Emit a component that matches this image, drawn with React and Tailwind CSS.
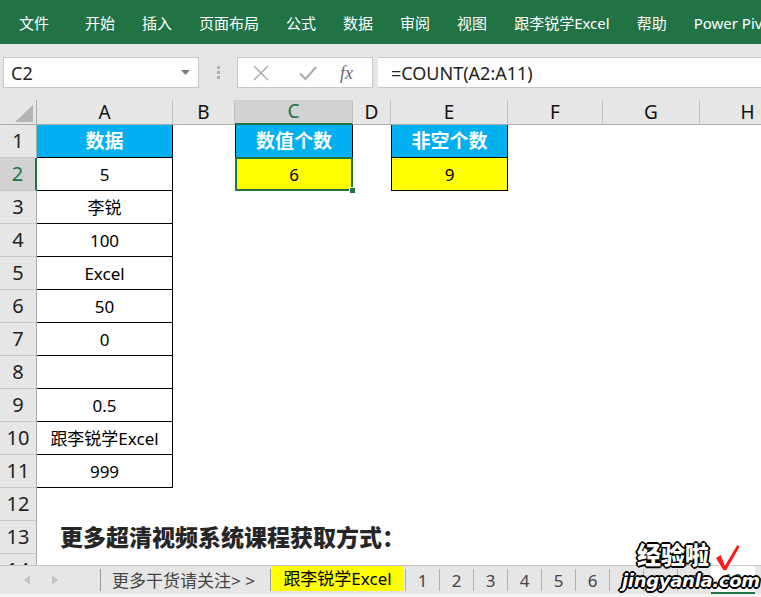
import React from "react";

const tabs = ["开始", "插入", "页面布局", "公式", "数据", "审阅", "视图", "跟李锐学Excel", "帮助", "Power Pivot"];

const colHeads = [
  { k: "A", cls: "" },
  { k: "B", cls: "" },
  { k: "C", cls: "sel" },
  { k: "D", cls: "" },
  { k: "E", cls: "" },
  { k: "F", cls: "" },
  { k: "G", cls: "" },
  { k: "H", cls: "" },
];

const colA = ["数据", "5", "李锐", "100", "Excel", "50", "0", "", "0.5", "跟李锐学Excel", "999"];

function Cell({ row, col }) {
  // column A table
  if (col === "A") {
    if (row === 1)
      return <div className="border-r border-b border-black bg-[#00b0f0] text-white font-bold text-[19px] flex items-center justify-center">{colA[0]}</div>;
    if (row <= 11)
      return <div className="border-r border-b border-black flex items-center justify-center text-[17px] text-black">{colA[row - 1]}</div>;
    if (row === 13)
      return (
        <div className="relative">
          <div className="absolute left-[23px] top-0 h-full flex items-center whitespace-nowrap text-[23px] font-black text-[#262626] z-10">
            更多超清视频系统课程获取方式：
          </div>
        </div>
      );
    return <div />;
  }
  if (col === "C") {
    if (row === 1)
      return <div className="border-l border-r border-b border-black bg-[#00b0f0] text-white font-bold text-[19px] flex items-center justify-center">数值个数</div>;
    if (row === 2)
      return (
        <div className="relative border-l border-r border-b border-black bg-[#ffff00] flex items-center justify-center text-[17px]">
          6
          <div className="absolute -left-[1px] -top-[1px] -right-[1px] -bottom-[1px] border-2 border-[#217346]" />
          <div className="absolute -right-[4px] -bottom-[4px] w-[7px] h-[7px] bg-[#217346] border border-white" />
        </div>
      );
    return <div />;
  }
  if (col === "E") {
    if (row === 1)
      return <div className="border-l border-r border-b border-black bg-[#00b0f0] text-white font-bold text-[19px] flex items-center justify-center">非空个数</div>;
    if (row === 2)
      return <div className="border-l border-r border-b border-black bg-[#ffff00] flex items-center justify-center text-[17px]">9</div>;
    return <div />;
  }
  return <div />;
}

function RowHead({ row }) {
  if (row === 2)
    return <div className="bg-[#d2d2d2] border-r-2 border-r-[#217346] border-b border-b-[#c8c8c8] flex items-center justify-center text-[20px] text-[#217346]">{row}</div>;
  return <div className="bg-[#e6e6e6] border-r border-r-[#ababab] border-b border-b-[#c8c8c8] flex items-center justify-center text-[20px] text-[#222]">{row}</div>;
}

const outline = "[text-shadow:2px_0_0_#000,-2px_0_0_#000,0_2px_0_#000,0_-2px_0_#000,1px_1px_0_#000,-1px_-1px_0_#000,1px_-1px_0_#000,-1px_1px_0_#000]";

export default function App() {
  const rows = Array.from({ length: 14 }, (_, i) => i + 1);
  const cols = ["A", "B", "C", "D", "E", "F", "G", "H"];

  return (
    <div className="relative w-[761px] h-[597px] overflow-hidden flex flex-col bg-white font-['Noto_Sans','Noto_Sans_CJK_SC',sans-serif] leading-none">
      {/* ribbon tabs */}
      <div className="h-[44px] shrink-0 bg-[#217346] flex items-center pl-[19px] pt-[2px] gap-[27px] text-white text-[15px] whitespace-nowrap">
        <span className="mr-[9px]">文件</span>
        {tabs.map((t) => (
          <span key={t}>{t}</span>
        ))}
      </div>

      {/* formula bar */}
      <div className="h-[56px] shrink-0 bg-[#e6e6e6] flex items-start pt-[13px]">
        <div className="ml-[3px] w-[196px] h-[31px] shrink-0 bg-white border border-[#c6c6c6] flex items-center justify-between pl-[7px] pr-[8px]">
          <span className="text-[18px] text-[#222]">C2</span>
          <svg width="9" height="5" viewBox="0 0 9 5"><path d="M0 0h9L4.5 5z" fill="#7a7a7a" /></svg>
        </div>
        <div className="w-[38px] h-[31px] shrink-0 flex flex-col items-center justify-center gap-[2px]">
          <span className="w-[3px] h-[3px] bg-[#b0b0b0]" />
          <span className="w-[3px] h-[3px] bg-[#b0b0b0]" />
          <span className="w-[3px] h-[3px] bg-[#b0b0b0]" />
        </div>
        <div className="w-[136px] h-[31px] shrink-0 bg-white border border-[#c6c6c6] flex items-center">
          <svg className="ml-[15px]" width="16" height="16" viewBox="0 0 16 16"><path d="M1 1L15 15M15 1L1 15" stroke="#a9a9a9" strokeWidth="1.4" /></svg>
          <svg className="ml-[30px]" width="18" height="16" viewBox="0 0 18 16"><path d="M1 8.5L6.5 14L17 2" stroke="#a9a9a9" strokeWidth="2" fill="none" /></svg>
          <span className="ml-[23px] font-['Liberation_Serif',serif] italic text-[18px] text-[#6b6b6b]">fx</span>
        </div>
        <div className="ml-[5px] flex-1 h-[31px] bg-white border-y border-[#c6c6c6] flex items-center pl-[13px] text-[18px] text-[#222]">
          =COUNT(A2:A11)
        </div>
      </div>

      {/* sheet */}
      <div className="h-[465px] shrink-0 overflow-hidden">
        <div className="grid grid-cols-[37px_136px_62px_118px_38px_117px_95px_97px_96px] grid-rows-[25px_repeat(14,33px)]">
          <div className="bg-[#e6e6e6] border-r border-b border-[#ababab] relative">
            <svg className="absolute left-[15px] top-[5px]" width="18" height="17" viewBox="0 0 18 17"><path d="M18 0V17H0z" fill="#b4b4b4" /></svg>
          </div>
          {colHeads.map((c) =>
            c.cls === "sel" ? (
              <div key={c.k} className="bg-[#d2d2d2] border-r border-r-[#c0c0c0] border-b-2 border-b-[#217346] flex items-center justify-center text-[19px] text-[#217346]">{c.k}</div>
            ) : (
              <div key={c.k} className="bg-[#e6e6e6] border-r border-r-[#c0c0c0] border-b border-b-[#ababab] flex items-center justify-center text-[19px] text-[#111]">{c.k}</div>
            )
          )}
          {rows.map((r) => (
            <React.Fragment key={r}>
              <RowHead row={r} />
              {cols.map((c) => (
                <Cell key={c} row={r} col={c} />
              ))}
            </React.Fragment>
          ))}
        </div>
      </div>

      {/* sheet tabs */}
      <div className="h-[29px] shrink-0 bg-[#e6e6e6] border-t border-[#c6c6c6] flex items-stretch text-[17px] whitespace-nowrap">
        <div className="w-[100px] shrink-0 flex items-center gap-[22px] pl-[24px]">
          <svg width="6" height="10" viewBox="0 0 6 10"><path d="M6 0V10L0 5z" fill="#c4c4c4" /></svg>
          <svg width="6" height="10" viewBox="0 0 6 10"><path d="M0 0V10L6 5z" fill="#c4c4c4" /></svg>
        </div>
        <div className="my-[3px] w-px shrink-0 bg-[#9a9a9a]" />
        <div className="w-[169px] shrink-0 flex items-center pl-[11px] text-[#444]">更多干货请关注&gt; &gt;</div>
        <div className="my-[3px] w-px shrink-0 bg-[#9a9a9a]" />
        <div className="w-[131px] shrink-0 ml-[1px] mb-[3px] bg-[#ffff00] flex items-center justify-center text-black">跟李锐学Excel</div>
        <div className="w-[2px] shrink-0" />
        {["1", "2", "3", "4", "5", "6", "7", "8", "9"].map((n) => (
          <React.Fragment key={n}>
            <div className="my-[3px] w-px shrink-0 bg-[#b0b0b0]" />
            <div className="w-[33px] shrink-0 flex items-center justify-center text-[#444]">{n}</div>
          </React.Fragment>
        ))}
        <div className="w-[44px] shrink-0 bg-white border-b-2 border-[#217346] flex items-center justify-center text-[#217346]">10</div>
      </div>
      <div className="h-[3px] shrink-0 bg-[#f3f3f3]" />

      {/* watermark */}
      <div className={"absolute left-[637px] top-[543px] text-white font-black text-[24px] " + outline}>经验啦</div>
      <svg className="absolute left-[713px] top-[542px]" width="28" height="30" viewBox="0 0 28 30">
        <path d="M2 16L8 12L12 22L24 2L27.5 4.5L13.5 29L10 29z" fill="#ff1a1a" stroke="#fff" strokeWidth="1.5" />
      </svg>
      <div className={"absolute left-[622px] top-[572px] text-white font-black italic text-[18px] tracking-[-0.3px] font-['DejaVu_Sans',sans-serif] " + outline}>
        jingyanla.com
      </div>
    </div>
  );
}
